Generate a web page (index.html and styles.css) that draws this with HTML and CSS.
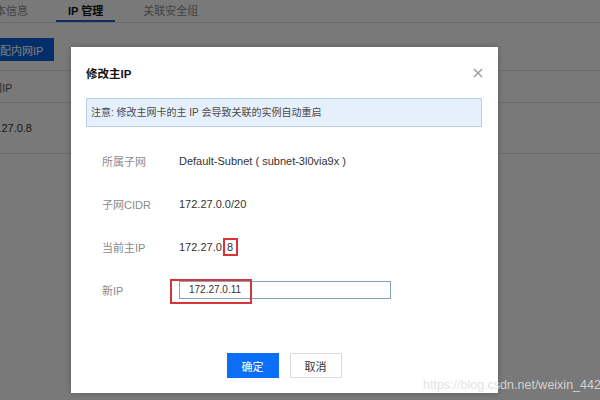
FILE: index.html
```html
<!DOCTYPE html>
<html lang="zh-CN">
<head>
  <meta charset="UTF-8" />
  <meta name="viewport" content="width=device-width, initial-scale=1.0" />
  <title>修改主IP</title>
  <link rel="stylesheet" href="styles.css">
</head>
<body>
  <div class="page">
    <!-- 标签页 -->
    <div class="tabs">
      <div class="tab">基本信息</div>
      <div class="tab active">IP 管理</div>
      <div class="tab">关联安全组</div>
    </div>

    <button class="btn-primary">分配内网IP</button>

    <table class="ip-table">
      <thead>
        <tr><th>内网IP</th><th></th></tr>
      </thead>
      <tbody>
        <tr><td>172.27.0.8</td><td></td></tr>
      </tbody>
    </table>
  </div>

  <!-- 修改主IP 弹窗 -->
  <div class="mask">
    <div class="dialog">
      <div class="dialog-head">
        <h3>修改主IP</h3>
        <svg class="close" width="10" height="10" viewBox="0 0 10 10">
          <path d="M1 1L9 9M9 1L1 9" stroke="#9a9a9a" stroke-width="1.4" fill="none" />
        </svg>
      </div>

      <div class="tip">注意: 修改主网卡的主 IP 会导致关联的实例自动重启</div>

      <div class="form">
        <div class="row">
          <span class="label">所属子网</span>
          <span class="value">Default-Subnet ( subnet-3l0via9x )</span>
        </div>
        <div class="row">
          <span class="label">子网CIDR</span>
          <span class="value">172.27.0.0/20</span>
        </div>
        <div class="row">
          <span class="label">当前主IP</span>
          <span class="value">172.27.0.<span class="mark">8</span></span>
        </div>
        <div class="row">
          <span class="label">新IP</span>
          <div class="input-wrap">
            <input type="text" value="172.27.0.11" />
            <span class="mark-box"></span>
          </div>
        </div>
      </div>

      <div class="actions">
        <button class="btn-ok">确定</button>
        <button class="btn-cancel">取消</button>
      </div>
    </div>
  </div>

  <div class="watermark">https://blog.csdn.net/weixin_44227389</div>
</body>
</html>
```

FILE: styles.css
```css
* {
  box-sizing: border-box;
  font-family: "Liberation Sans", "Noto Sans CJK SC", sans-serif;
}

body {
  margin: 0;
  background: #f6f6f6;
  width: 600px;
  height: 400px;
  overflow: hidden;
  position: relative;
}

/* 底层页面 */
.page {
  margin-left: -28px;
}

.tabs {
  display: flex;
  gap: 16px;
  height: 23px;
  border-bottom: 1px solid #d8d8d8;
  background: #f6f6f6;
}

.tab {
  padding: 5px 12px 3px;
  font-size: 11px;
  line-height: 12px;
  color: #888;
  border-bottom: 2px solid transparent;
}

.tab.active {
  color: #111;
  font-weight: bold;
  border-bottom-color: #1b5fbf;
}

.btn-primary {
  display: block;
  margin: 15px 0 0 6px;
  height: 23px;
  padding: 0 11px;
  background: #0a5fd6;
  color: #fff;
  border: none;
  font-size: 11px;
}

.ip-table {
  margin-top: 9px;
  width: 100%;
  border-collapse: collapse;
  font-size: 11px;
  color: #333;
}

.ip-table th,
.ip-table td {
  text-align: left;
  padding: 0 0 0 8px;
  border-top: 1px solid #d8d8d8;
  border-bottom: 1px solid #d8d8d8;
  font-weight: normal;
}

.ip-table th {
  height: 32px;
  color: #555;
}

.ip-table td {
  height: 51px;
}

/* 遮罩 + 弹窗 */
.mask {
  position: absolute;
  inset: 0;
  background: rgba(0, 0, 0, 0.51);
}

.dialog {
  position: absolute;
  left: 71px;
  top: 47px;
  width: 427px;
  background: #fff;
  padding: 18px 16px 15px 15px;
  box-shadow: 0 0 6px rgba(0, 0, 0, 0.25);
}

.dialog-head {
  display: flex;
  justify-content: space-between;
  align-items: center;
  height: 16px;
}

.dialog-head h3 {
  margin: 0;
  font-size: 11.5px;
  font-weight: bold;
  color: #111;
}

.close {
  margin-right: -1px;
}

.tip {
  margin-top: 17px;
  height: 29px;
  line-height: 27px;
  padding-left: 4px;
  background: #e5f0fc;
  border: 1px solid #b7d1e8;
  font-size: 10px;
  color: #4a4a4a;
}

.form {
  margin-top: 12px;
  padding-left: 16px;
}

.row {
  display: flex;
  align-items: center;
  height: 43px;
  font-size: 11px;
}

.label {
  width: 77px;
  color: #8a8a8a;
}

.value {
  color: #333;
}

.mark {
  display: inline-block;
  padding: 0 3px 0 2px;
  height: 18px;
  line-height: 14px;
  border: 2px solid #d8353a;
  margin-left: -2px;
}

.input-wrap {
  position: relative;
}

.input-wrap input {
  width: 212px;
  height: 18px;
  padding: 0 0 0 9px;
  border: 1px solid #7ea6bd;
  font-size: 10px;
  color: #333;
  outline: none;
}

/* 红框标注 */
.mark-box {
  position: absolute;
  left: -9px;
  top: -2px;
  width: 82px;
  height: 25px;
  border: 2px solid #d8353a;
}

.actions {
  display: flex;
  justify-content: center;
  gap: 11px;
  margin-top: 42px;
}

.actions button {
  width: 52px;
  height: 25px;
  font-size: 11px;
  cursor: pointer;
}

.btn-ok {
  background: #0b6ef6;
  color: #fff;
  border: none;
}

.btn-cancel {
  background: #fff;
  color: #333;
  border: 1px solid #d9d9d9;
}

.watermark {
  position: absolute;
  left: 423px;
  top: 378px;
  font-size: 12.5px;
  white-space: nowrap;
  color: rgba(222, 222, 222, 0.9);
}
```
